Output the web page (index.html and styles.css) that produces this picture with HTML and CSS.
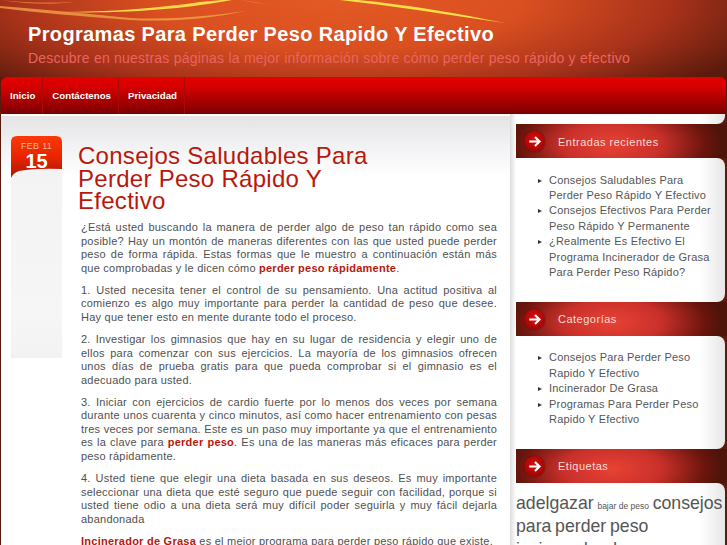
FILE: index.html
```html
<!DOCTYPE html>
<html lang="es">
<head>
<meta charset="utf-8">
<title>Programas Para Perder Peso Rapido Y Efectivo</title>
<link rel="stylesheet" href="styles.css">
</head>
<body>
<div class="page">
  <header class="masthead">
    <svg class="streaks" viewBox="0 0 727 77" aria-hidden="true">
      <path d="M0 0 C30 3 50 3 75 2 C50 5 25 4 0 0Z" fill="#f5a050" opacity=".6"/>
      <path d="M60 12 C110 12 160 8 200 2 L222 0 L232 0 C190 8 130 14 60 12Z" fill="#f8e04a" opacity=".95"/>
      <path d="M0 6 C50 10 90 14 130 18 C170 20 210 16 245 11 C210 19 170 22 130 20 C80 16 40 13 0 8Z" fill="#f3a14a" opacity=".8"/>
      <path d="M340 0 L358 0 C410 5 460 14 505 23 C450 15 395 6 340 0Z" fill="#fbe84a" opacity=".95"/>
      <path d="M240 0 C255 2 265 4 270 4 C260 4 250 2 240 0Z" fill="#f5a050" opacity=".6"/>
    </svg>
    <h1 class="site-title">Programas Para Perder Peso Rapido Y Efectivo</h1>
    <p class="tagline">Descubre en nuestras páginas la mejor información sobre cómo perder peso rápido y efectivo</p>
  </header>
  <nav class="nav">
    <a class="nav-item" href="#">Inicio</a>
    <a class="nav-item" href="#">Contáctenos</a>
    <a class="nav-item" href="#">Privacidad</a>
  </nav>
  <div class="columns">
    <main class="main">
      <article class="post">
        <div class="date-col">
          <div class="date-badge">
            <span class="date-month">FEB 11</span>
            <span class="date-day">15</span>
          </div>
        </div>
        <div class="post-body">
          <h2 class="post-title">Consejos Saludables Para Perder Peso Rápido Y Efectivo</h2>
          <p>¿Está usted buscando la manera de perder algo de peso tan rápido como sea posible? Hay un montón de maneras diferentes con las que usted puede perder peso de forma rápida. Estas formas que le muestro a continuación están más que comprobadas y le dicen cómo <a href="#">perder peso rápidamente</a>.</p>
          <p>1. Usted necesita tener el control de su pensamiento. Una actitud positiva al comienzo es algo muy importante para perder la cantidad de peso que desee. Hay que tener esto en mente durante todo el proceso.</p>
          <p>2. Investigar los gimnasios que hay en su lugar de residencia y elegir uno de ellos para comenzar con sus ejercicios. La mayoría de los gimnasios ofrecen unos días de prueba gratis para que pueda comprobar si el gimnasio es el adecuado para usted.</p>
          <p>3. Iniciar con ejercicios de cardio fuerte por lo menos dos veces por semana durante unos cuarenta y cinco minutos, así como hacer entrenamiento con pesas tres veces por semana. Este es un paso muy importante ya que el entrenamiento es la clave para <a href="#">perder peso</a>. Es una de las maneras más eficaces para perder peso rápidamente.</p>
          <p>4. Usted tiene que elegir una dieta basada en sus deseos. Es muy importante seleccionar una dieta que esté seguro que puede seguir con facilidad, porque si usted tiene odio a una dieta será muy difícil poder seguirla y muy fácil dejarla abandonada</p>
          <p><a href="#">Incinerador de Grasa</a> es el mejor programa para perder peso rápido que existe.</p>
        </div>
      </article>
    </main>
    <aside class="sidebar">
      <div class="sidebar-cap"></div>
      <section class="widget">
        <h3 class="widget-title"><svg class="arrow" viewBox="0 0 22 22" aria-hidden="true"><path d="M5.5 11H16M11.5 6.2 16.3 11l-4.8 4.8" fill="none" stroke="#fff" stroke-width="2.2"/></svg>Entradas recientes</h3>
        <ul class="widget-body">
          <li>Consejos Saludables Para Perder Peso Rápido Y Efectivo</li>
          <li>Consejos Efectivos Para Perder Peso Rápido Y Permanente</li>
          <li>¿Realmente Es Efectivo El Programa Incinerador de Grasa Para Perder Peso Rápido?</li>
        </ul>
      </section>
      <section class="widget">
        <h3 class="widget-title"><svg class="arrow" viewBox="0 0 22 22" aria-hidden="true"><path d="M5.5 11H16M11.5 6.2 16.3 11l-4.8 4.8" fill="none" stroke="#fff" stroke-width="2.2"/></svg>Categorías</h3>
        <ul class="widget-body">
          <li>Consejos Para Perder Peso Rapido Y Efectivo</li>
          <li>Incinerador De Grasa</li>
          <li>Programas Para Perder Peso Rapido Y Efectivo</li>
        </ul>
      </section>
      <section class="widget">
        <h3 class="widget-title"><svg class="arrow" viewBox="0 0 22 22" aria-hidden="true"><path d="M5.5 11H16M11.5 6.2 16.3 11l-4.8 4.8" fill="none" stroke="#fff" stroke-width="2.2"/></svg>Etiquetas</h3>
        <div class="widget-body tags">adelgazar <span class="tag-s">bajar de peso</span> consejos para perder peso incinerador de grasa</div>
      </section>
    </aside>
  </div>
</div>
</body>
</html>
```
FILE: styles.css
```css
* { box-sizing: border-box; }
html, body { margin: 0; padding: 0; height: 545px; overflow: hidden; }
body { font-family: "Liberation Sans", Arial, sans-serif; background: #5a1a0c; }
.page { width: 727px; height: 545px; overflow: hidden; }
.masthead {
  position: relative;
  height: 77px;
  padding: 21px 28px 0;
  overflow: hidden;
  background:
    radial-gradient(ellipse 460px 125px at 340px 0, #e35a24 0%, #d94f20 40%, #a8321a 72%, rgba(110,32,14,0) 100%),
    #5a1a0c;
}
.streaks { position: absolute; left: 0; top: 0; width: 727px; height: 77px; }
.site-title { position: relative; margin: 0; font-size: 20px; line-height: 26px; font-weight: bold; letter-spacing: .35px; color: #fff; }
.tagline { position: relative; margin: 0; font-size: 14px; line-height: 22px; letter-spacing: .23px; color: #ea6460; }
.nav {
  display: flex;
  height: 37px;
  margin: 0 1px;
  border-radius: 6px 6px 0 0;
  background: linear-gradient(#e40000 0%, #d80000 25%, #7d0000 100%);
}
.nav-item {
  display: flex;
  align-items: center;
  padding: 0 7px 0 9px;
  border-right: 1px solid #a80a0a;
  color: #fff;
  font-size: 9.7px;
  font-weight: bold;
  text-decoration: none;
}
.columns { display: flex; height: 431px; }
.main {
  flex: none;
  width: 509px;
  margin-left: 1px;
  border-top: 2px solid #fff;
  background: linear-gradient(#e4e4e4 0, #f2f2f4 30px, #fff 60px);
  box-shadow: 2px 0 6px rgba(0,0,0,.14);
  padding: 20px 13px 0 10px;
}
.post { display: flex; gap: 16px; }
.date-col { flex: none; width: 51px; height: 222px; background: linear-gradient(#f2f2f4, #f6f6f6 80%, #f2f2f2); border-radius: 6px 6px 0 0; }
.date-badge {
  display: flex;
  flex-direction: column;
  align-items: center;
  height: 43px;
  padding-top: 5px;
  clip-path: path("M0 6 Q0 0 6 0 H45 Q51 0 51 6 V33 Q25 32 8 35 Q2 37 0 42 Z");
  background: linear-gradient(#f93a08 0%, #e82400 50%, #a81500 100%);
  color: #fff;
}
.date-month { font-size: 9px; line-height: 11px; letter-spacing: .3px; color: #f6b5a0; }
.date-day { font-size: 20px; line-height: 18px; font-weight: bold; }
.post-body { flex: 1; min-width: 0; padding-top: 9px; }
.post-title { margin: 0 0 8.5px; max-width: 310px; font-size: 24px; line-height: 22.5px; font-weight: normal; letter-spacing: .28px; color: #b8180c; }
.post-body p { margin: 0 0 8.4px 3px; font-size: 11px; line-height: 13.6px; letter-spacing: .232px; color: #505050; text-align: justify; }
.post-body a { color: #b8180c; font-weight: bold; text-decoration: none; letter-spacing: .25px; }
.sidebar {
  flex: none;
  width: 217px;
  padding-left: 6px;
  background: linear-gradient(to right, #dcdcdc, #fff) no-repeat 0 0 / 6px 100%;
}
.sidebar-cap {
  height: 10px;
  margin-right: 2px;
  border-radius: 0 0 8px 0;
  background: linear-gradient(to right, #fff 88%, #e6e6e6 100%);
}
.widget-title {
  display: flex;
  align-items: center;
  gap: 13px;
  height: 34px;
  margin: 0;
  padding: 1px 0 0 8px;
  border-radius: 7px 0 0 7px;
  background: radial-gradient(ellipse 110px 50px at 96px 20px, #e84234 0%, #c9302a 45%, #6a150c 85%, #4e140a 100%);
  color: #f5dcd8;
  font-size: 11px;
  font-weight: normal;
  letter-spacing: .5px;
}
.arrow {
  flex: none;
  width: 21px;
  height: 21px;
  border-radius: 50%;
  background: radial-gradient(circle at 50% 40%, #d81010, #8a0000);
  box-shadow: 0 0 2px rgba(0,0,0,.5);
}
.widget-body {
  list-style: none;
  margin: 0 2px 0 0;
  padding: 14.5px 10px 21.5px 33px;
  border-radius: 0 8px 8px 0;
  background: linear-gradient(to right, #fff 88%, #e6e6e6 100%);
}
.widget-body li { position: relative; font-size: 11px; line-height: 15.4px; letter-spacing: .2px; color: #555; }
.widget-body li::before {
  content: "";
  position: absolute;
  left: -11px;
  top: 6px;
  border-left: 4px solid #333;
  border-top: 2px solid transparent;
  border-bottom: 2px solid transparent;
}
.tags { padding: 9px 2px 22px 0; color: #555; font-size: 17.7px; line-height: 23px; word-spacing: -1.2px; }
.tag-s { font-size: 8.5px; line-height: 1; word-spacing: 0; }
```
